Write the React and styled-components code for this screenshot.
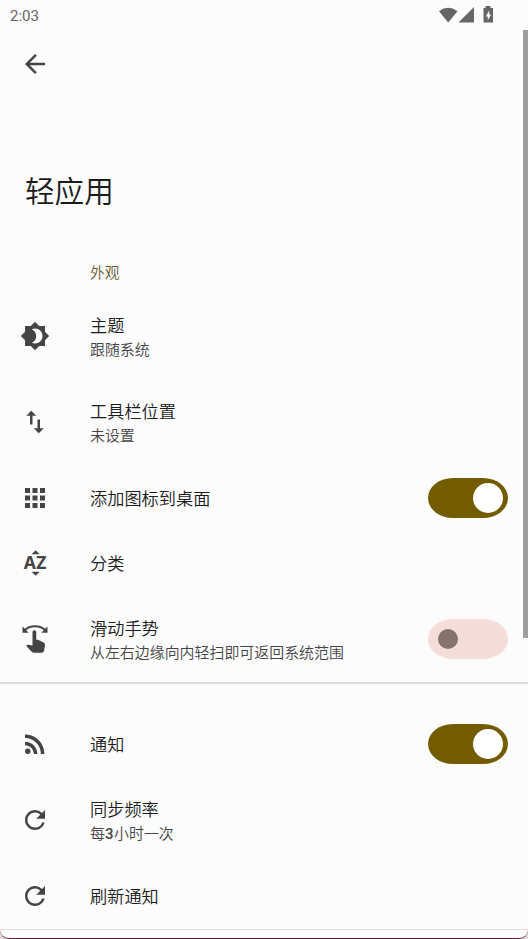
import React from "react";
import styled, { createGlobalStyle } from "styled-components";
import {
  MdArrowBack,
  MdBrightness4,
  MdSwapVert,
  MdApps,
  MdSwipe,
  MdRssFeed,
  MdRefresh,
} from "react-icons/md";

const GlobalStyle = createGlobalStyle`
  * { box-sizing: border-box; }
  body { margin: 0; background: #dcd6d9; }
`;

const Screen = styled.div`
  position: relative;
  width: 528px;
  height: 939px;
  overflow: hidden;
  background: #fcfcfc;
  border-bottom: 1px solid #5c1a35;
  border-radius: 0 0 9px 9px;
  color: #1b1b1b;
  font-family: "Roboto", "Noto Sans CJK SC", sans-serif;
`;

const StatusBar = styled.header`
  display: flex;
  align-items: center;
  justify-content: space-between;
  height: 30px;
  padding: 0 34px 0 10px;
  color: #666;
`;

const Clock = styled.span`
  font-size: 15px;
  line-height: 18px;
  padding-top: 1px;
`;

const StatusIcons = styled.svg`
  display: block;
  width: 56px;
  height: 18px;
  fill: #666;
`;

const Toolbar = styled.nav`
  display: flex;
  align-items: center;
  height: 68px;
  padding-left: 19.5px;
  color: #444;
`;

const Heading = styled.h1`
  margin: 72px 0 0 25px;
  font-size: 29.6px;
  font-weight: 350;
  line-height: 44px;
`;

const SectionLabel = styled.h2`
  margin: 48px 0 0 90px;
  color: #6b5a35;
  font-size: 14.8px;
  font-weight: 350;
  line-height: 22px;
`;

const List = styled.ul`
  margin: 0;
  padding: ${({ $top }) => $top}px 0 ${({ $bottom }) => $bottom || 0}px;
  list-style: none;
`;

const Row = styled.li`
  display: grid;
  grid-template-columns: 70px 1fr auto;
  align-items: center;
  height: ${({ $tall }) => ($tall ? 86.5 : 65)}px;
  padding: 0 20px 0 20px;
`;

const IconSlot = styled.span`
  display: flex;
  color: #444;
`;

const Labels = styled.div`
  padding-top: ${({ $double }) => ($double ? 3.8 : 2)}px;
`;

const Title = styled.div`
  font-size: 17.2px;
  font-weight: 350;
  line-height: 24px;
`;

const Summary = styled.div`
  color: #444;
  font-size: 14.95px;
  font-weight: 350;
  line-height: 24px;
`;

const Count = styled.span`
  font-weight: 500;
  letter-spacing: 0.6px;
`;

const Track = styled.span`
  display: flex;
  align-items: center;
  justify-content: ${({ $on }) => ($on ? "flex-end" : "flex-start")};
  width: 80px;
  height: 40px;
  padding: 0 ${({ $on }) => ($on ? 5 : 10)}px;
  border-radius: 25px / 20px;
  background: ${({ $on }) => ($on ? "#735c00" : "#f5ddda")};
`;

const Knob = styled.span`
  width: ${({ $on }) => ($on ? 30 : 20)}px;
  height: ${({ $on }) => ($on ? 30 : 20)}px;
  border-radius: 50%;
  background: ${({ $on }) => ($on ? "#fff" : "#857370")};
`;

const Divider = styled.hr`
  height: ${({ $size }) => $size}px;
  margin: 0;
  border: 0;
  background: #dcdcdc;
`;

const Scrollbar = styled.div`
  position: absolute;
  top: 30px;
  right: 0;
  width: 5px;
  height: 608px;
  background: #9e9e9e;
`;

const SortLetters = styled.text`
  font: 700 14px "Noto Sans", sans-serif;
`;

function SortIcon() {
  return (
    <svg width="30" height="30" viewBox="0 0 24 24" fill="currentColor">
      <path d="M9.25 5 12.5 1.75 15.75 5zM15.75 19l-3.25 3.25L9.25 19z" />
      <SortLetters x="2.9" y="17" textLength="18.2" lengthAdjust="spacing">AZ</SortLetters>
    </svg>
  );
}

function Toggle({ on }) {
  return (
    <Track $on={on} role="switch" aria-checked={on}>
      <Knob $on={on} />
    </Track>
  );
}

function Setting({ icon, title, summary, toggle }) {
  return (
    <Row $tall={Boolean(summary)}>
      <IconSlot>{icon}</IconSlot>
      <Labels $double={Boolean(summary)}>
        <Title>{title}</Title>
        {summary && <Summary>{summary}</Summary>}
      </Labels>
      {toggle !== undefined && <Toggle on={toggle} />}
    </Row>
  );
}

export default function App() {
  return (
    <>
      <GlobalStyle />
      <Screen>
        <StatusBar>
          <Clock>2:03</Clock>
          <StatusIcons viewBox="0 0 56 18">
            <path d="M1 5.2Q10 -1.6 19.5 5.2L10.2 16.5z" />
            <path d="M20.5 16.5 36 1v15.500z" />
            <path
              fillRule="evenodd"
              d="M47.500 0h5v2h2.500v14.500H45.500V2h2zM51.200 4.500 47.800 10.400h2v3.800l3.400-5.700h-2z"
            />
          </StatusIcons>
        </StatusBar>
        <Toolbar>
          <MdArrowBack size={30} />
        </Toolbar>
        <Heading>轻应用</Heading>
        <SectionLabel>外观</SectionLabel>
        <List $top={8.5}>
          <Setting icon={<MdBrightness4 size={30} />} title="主题" summary="跟随系统" />
          <Setting icon={<MdSwapVert size={30} />} title="工具栏位置" summary="未设置" />
          <Setting icon={<MdApps size={30} />} title="添加图标到桌面" toggle={true} />
          <Setting icon={<SortIcon />} title="分类" />
          <Setting
            icon={<MdSwipe size={30} />}
            title="滑动手势"
            summary="从左右边缘向内轻扫即可返回系统范围"
            toggle={false}
          />
        </List>
        <Divider $size={2} />
        <List $top={27.75} $bottom={1}>
          <Setting icon={<MdRssFeed size={30} />} title="通知" toggle={true} />
          <Setting
            icon={<MdRefresh size={30} />}
            title="同步频率"
            summary={<>每<Count>3</Count>小时一次</>}
          />
          <Setting icon={<MdRefresh size={30} />} title="刷新通知" />
        </List>
        <Divider $size={1} />
        <Scrollbar />
      </Screen>
    </>
  );
}
